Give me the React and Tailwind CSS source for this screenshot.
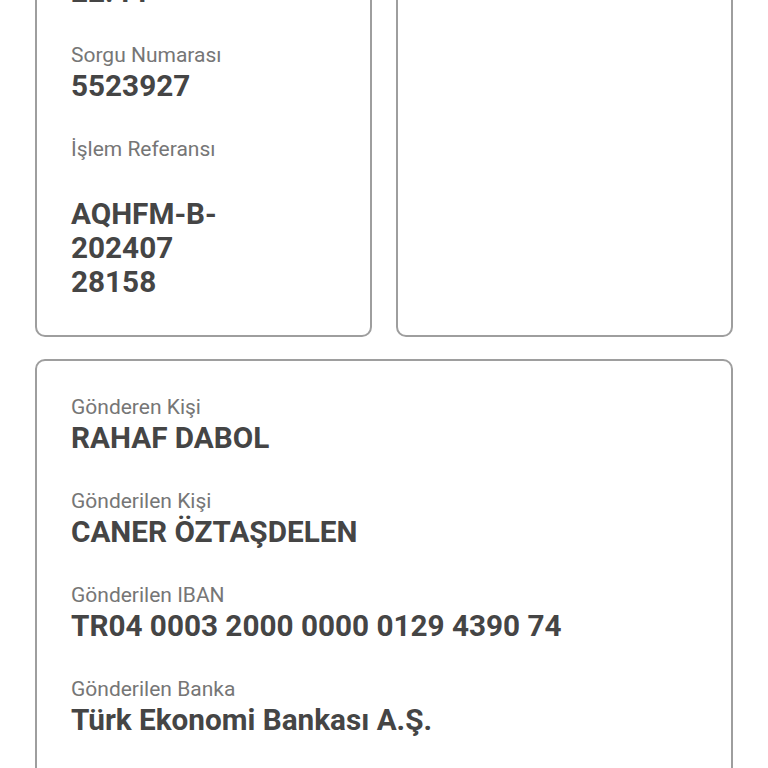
export default function App() {
  const sender = [
    { label: "Gönderen Kişi", value: "RAHAF DABOL" },
    { label: "Gönderilen Kişi", value: "CANER ÖZTAŞDELEN" },
    { label: "Gönderilen IBAN", value: "TR04 0003 2000 0000 0129 4390 74" },
    { label: "Gönderilen Banka", value: "Türk Ekonomi Bankası A.Ş." },
    { label: "Açıklama", value: "" },
  ];

  return (
    <div
      className="bg-white h-[768px] overflow-hidden px-[35px]"
      style={{ fontFamily: "Roboto, 'Noto Sans', sans-serif" }}
    >
      <div className="-mt-[84px] flex flex-col gap-[22px]">
        {/* Top row */}
        <div className="grid grid-cols-2 gap-[24px]">
          <div className="border-2 border-[#9e9e9e] rounded-[10px] px-[34px] pt-[33px] pb-[36px] flex flex-col gap-[36px]">
            <Field label="Tarih" value="22:44" />
            <Field label="Sorgu Numarası" value="5523927" />
            <div className="flex flex-col">
              <div className="text-[21px] leading-[20px] text-[#767676]">İşlem Referansı</div>
              <div className="mt-[38px] text-[29.7px] leading-[34px] font-bold text-[#454545]">
                <div>AQHFM-B-</div>
                <div>202407</div>
                <div>28158</div>
              </div>
            </div>
          </div>
          <div className="border-2 border-[#9e9e9e] rounded-[10px]" />
        </div>

        {/* Sender / receiver */}
        <div className="border-2 border-[#9e9e9e] rounded-[10px] px-[34px] pt-[36px] pb-[35px] flex flex-col gap-[36px]">
          {sender.map((f, i) => (
            <Field key={i} label={f.label} value={f.value} />
          ))}
        </div>
      </div>
    </div>
  );
}

function Field({ label, value }) {
  return (
    <div className="flex flex-col">
      <div className="text-[21px] leading-[20px] mb-[4px] text-[#767676]">{label}</div>
      <div className="text-[29.7px] leading-[34px] font-bold text-[#454545] min-h-[34px]">
        {value}
      </div>
    </div>
  );
}
